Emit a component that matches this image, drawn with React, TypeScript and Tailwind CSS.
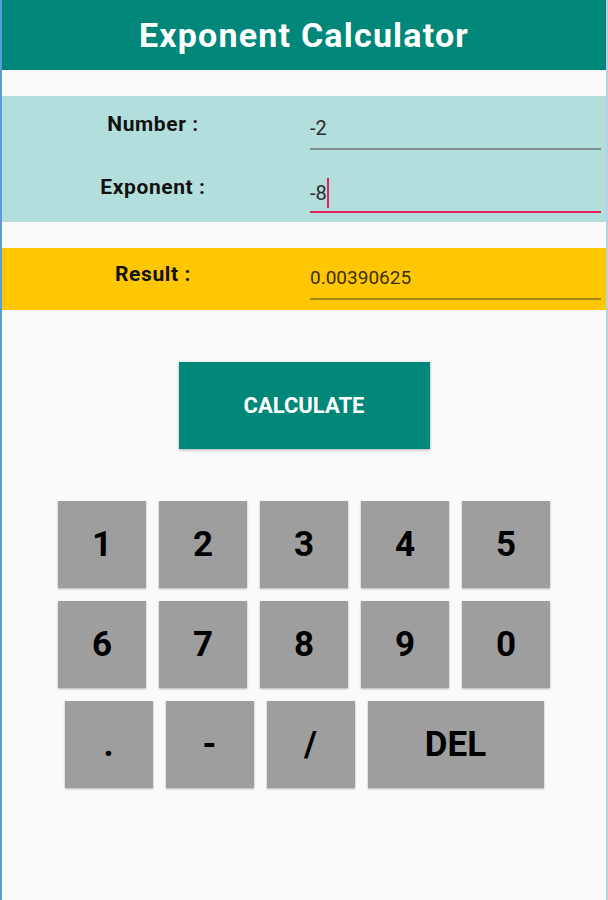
import React, { useState } from 'react'

const ROW1 = ['1', '2', '3', '4', '5']
const ROW2 = ['6', '7', '8', '9', '0']
const ROW3 = ['.', '-', '/']

const Key: React.FC<{ label: string; wide?: boolean; onPress: (k: string) => void }> = ({ label, wide, onPress }) => (
  <button
    onClick={() => onPress(label)}
    className={`${wide ? 'w-[176px]' : 'w-[88px]'} h-[87px] bg-[#9e9e9e] text-black font-bold text-[35px] leading-none shadow-[0_1px_2px_rgba(0,0,0,0.3)] flex items-center justify-center`}
  >
    {label}
  </button>
)

const App: React.FC = () => {
  const [number]   = useState('-2')
  const [exponent] = useState('-8')
  const result = Math.pow(Number(number), Number(exponent))

  const press = (_k: string) => {}

  return (
    <div
      className="w-[608px] min-h-[900px] bg-[#fafafa] border-l-2 border-l-[#5b9bd8] border-r-2 border-r-[#b5cfec]"
      style={{ fontFamily: 'Roboto, "Noto Sans", sans-serif' }}
    >
      {/* Header */}
      <div className="h-[70px] bg-[#00877a] flex items-center justify-center">
        <h1 className="text-white font-bold text-[34px] tracking-[1.2px] leading-none">Exponent Calculator</h1>
      </div>

      {/* Inputs */}
      <div className="mt-[26px] bg-[#b2dfdc] pb-[9px]">
        <div className="grid grid-cols-2 items-end h-[54px]">
          <p className="text-center font-bold text-[21px] tracking-[0.6px] leading-[24px] text-[#111] mb-[14px]">Number :</p>
          <div className="ml-[6px] mr-[5px] border-b-2 border-[#7f918f] pb-[6px]">
            <span className="text-[20px] leading-[24px] text-[#2b2b2b]">{number}</span>
          </div>
        </div>
        <div className="grid grid-cols-2 items-end h-[63px]">
          <p className="text-center font-bold text-[21px] tracking-[0.6px] leading-[24px] text-[#111] mb-[14px]">Exponent :</p>
          <div className="ml-[6px] mr-[5px] border-b-2 border-[#e8215e] pb-[6px] flex items-center">
            <span className="text-[20px] leading-[24px] text-[#2b2b2b]">{exponent}</span>
            <span className="w-[2px] h-[30px] bg-[#e8215e] -my-[4px]" />
          </div>
        </div>
      </div>

      {/* Result */}
      <div className="mt-[26px] bg-[#ffc602] pb-[10px]">
        <div className="grid grid-cols-2 items-end h-[52px]">
          <p className="text-center font-bold text-[21px] tracking-[0.6px] leading-[24px] text-[#111] mb-[14px]">Result :</p>
          <div className="ml-[6px] mr-[5px] border-b-2 border-[#a8871a] pb-[7px]">
            <span className="text-[19px] leading-[24px] text-[#3a2e00]">{result}</span>
          </div>
        </div>
      </div>

      {/* Calculate */}
      <div className="mt-[52px] flex justify-center">
        <button className="w-[251px] h-[87px] bg-[#00877a] text-white font-bold text-[22px] shadow-[0_1px_3px_rgba(0,0,0,0.3)]">
          CALCULATE
        </button>
      </div>

      {/* Keypad */}
      <div className="mt-[52px] flex flex-col items-center gap-[13px]">
        <div className="flex gap-[13px]">
          {ROW1.map(k => <Key key={k} label={k} onPress={press} />)}
        </div>
        <div className="flex gap-[13px]">
          {ROW2.map(k => <Key key={k} label={k} onPress={press} />)}
        </div>
        <div className="flex gap-[13px]">
          {ROW3.map(k => <Key key={k} label={k} onPress={press} />)}
          <Key label="DEL" wide onPress={press} />
        </div>
      </div>
    </div>
  )
}

export default App
